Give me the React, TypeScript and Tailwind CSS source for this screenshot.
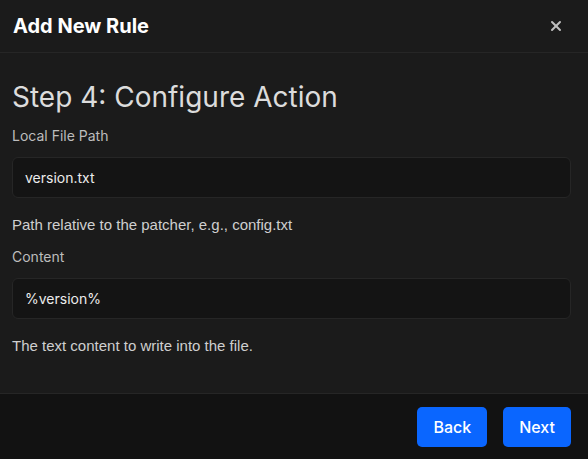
import { X } from 'lucide-react';

const poppins = { fontFamily: 'Inter, "Open Sans", sans-serif' };

function Field({ label, value, help }: { label: string; value: string; help: string }) {
  return (
    <div className="flex flex-col">
      <label className="text-[14px] leading-5 text-[#bdbdbd]" style={poppins}>
        {label}
      </label>
      <div
        className="mt-[11px] flex h-[41px] items-center rounded-md border border-[#262626] bg-[#141414] px-3 text-[14px] text-[#ececec]"
        style={poppins}
      >
        {value}
      </div>
      <p className="mt-[17px] text-[15px] leading-5 text-[#cfcfcf]" style={{ fontFamily: '"Liberation Sans", Arial, sans-serif' }}>
        {help}
      </p>
    </div>
  );
}

export default function App() {
  return (
    <div className="flex h-[459px] w-[588px] flex-col bg-[#1b1b1b]">
      {/* Header */}
      <div className="flex h-[53px] items-center justify-between border-b border-[#262626] pl-[13px] pr-[24px]">
        <h2 className="text-[20px] font-bold text-white" style={{ fontFamily: 'Inter, sans-serif' }}>
          Add New Rule
        </h2>
        <X className="h-[16px] w-[16px] text-[#bdbdbd]" strokeWidth={3} />
      </div>

      {/* Body */}
      <div className="flex flex-1 flex-col pl-3 pr-[17px] pt-[27px]">
        <h3 className="text-[28px] leading-[34px] text-[#dcdcdc]" style={poppins}>
          Step 4: Configure Action
        </h3>
        <div className="mt-[12px] flex flex-col gap-[12px]">
          <Field label="Local File Path" value="version.txt" help="Path relative to the patcher, e.g., config.txt" />
          <Field label="Content" value="%version%" help="The text content to write into the file." />
        </div>
      </div>

      {/* Footer */}
      <div className="flex h-[66px] items-center justify-end gap-4 border-t border-[#262626] bg-[#121212] pr-[17px]">
        <button className="h-[40px] rounded-[5px] bg-[#0a66ff] px-4 text-[16px] font-medium text-white" style={poppins}>
          Back
        </button>
        <button className="h-[40px] rounded-[5px] bg-[#0a66ff] px-4 text-[16px] font-medium text-white" style={poppins}>
          Next
        </button>
      </div>
    </div>
  );
}
